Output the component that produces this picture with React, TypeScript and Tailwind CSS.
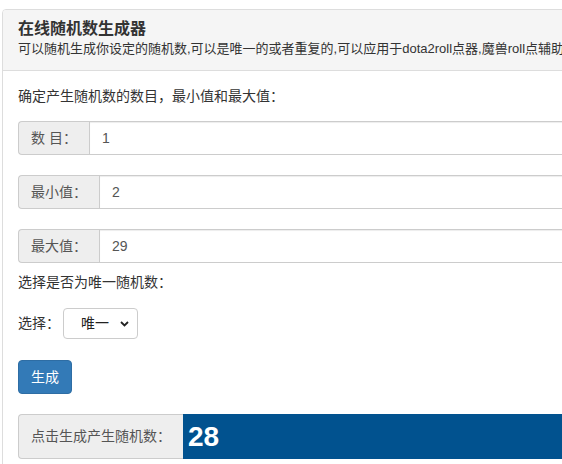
import { useState } from 'react';

const font = { fontFamily: '"Liberation Sans", "Noto Sans CJK SC", sans-serif' };

function Field({ label, value, addonWidth }: { label: string; value: string; addonWidth: string }) {
  return (
    <div className="flex h-[34px] text-[14px]">
      <span
        className={`${addonWidth} shrink-0 flex items-center px-[12px] bg-[#eeeeee] border border-r-0 border-[#cccccc] rounded-l-[4px] text-[#555555] whitespace-pre`}
      >
        {label}
      </span>
      <div className="flex-1 flex items-center px-[12px] border border-[#cccccc] text-[#555555] shadow-[inset_0_1px_1px_rgba(0,0,0,0.075)]">
        {value}
      </div>
    </div>
  );
}

export default function App() {
  const [unique] = useState('唯一');

  return (
    <div className="w-screen h-screen overflow-hidden bg-white pt-[9px] pl-[2px] text-[#333333]" style={font}>
      <div className="w-[760px] border border-[#dddddd] rounded-tl-[4px]">
        {/* panel heading */}
        <div className="bg-[#f5f5f5] border-b border-[#dddddd] px-[15px] py-[10px] rounded-tl-[3px]">
          <h3 className="text-[16px] leading-[18px] font-bold text-[#333333]">在线随机数生成器</h3>
          <p className="text-[13px] leading-[22px] whitespace-nowrap">
            可以随机生成你设定的随机数,可以是唯一的或者重复的,可以应用于dota2roll点器,魔兽roll点辅助
          </p>
        </div>

        {/* panel body */}
        <div className="p-[15px] text-[14px]">
          <p className="leading-[20px] mb-[15px]">确定产生随机数的数目，最小值和最大值：</p>

          <div className="flex flex-col gap-[20px] w-[600px]">
            <Field label="数 目：" value="1" addonWidth="w-[71px]" />
            <Field label="最小值：" value="2" addonWidth="w-[81px]" />
            <Field label="最大值：" value="29" addonWidth="w-[81px]" />
          </div>

          <p className="leading-[20px] mt-[9px]">选择是否为唯一随机数：</p>

          <div className="flex items-center mt-[16px] h-[31px]">
            <span>选择：</span>
            <div className="ml-[3px] w-[75px] h-[31px] border border-[#cccccc] rounded-[4px] flex items-center justify-between pl-[17px] pr-[7px] text-[#222222]">
              <span>{unique}</span>
              <svg width="9" height="6" viewBox="0 0 9 6" className="mr-[1px]">
                <path d="M1 1l3.5 3.5L8 1" fill="none" stroke="#222" strokeWidth="1.8" />
              </svg>
            </div>
          </div>

          <button className="mt-[21px] h-[34px] px-[12px] bg-[#337ab7] border border-[#2e6da4] rounded-[4px] text-white text-[14px]">
            生成
          </button>

          {/* result */}
          <div className="flex h-[45px] mt-[20px] w-[720px]">
            <span className="w-[165px] shrink-0 flex items-center px-[12px] bg-[#eeeeee] border border-r-0 border-[#cccccc] rounded-l-[4px] text-[#555555]">
              点击生成产生随机数：
            </span>
            <div className="flex-1 flex items-center pl-[5px] bg-[#01528f] text-white text-[28px] font-bold">
              28
            </div>
          </div>
        </div>
      </div>
    </div>
  );
}
